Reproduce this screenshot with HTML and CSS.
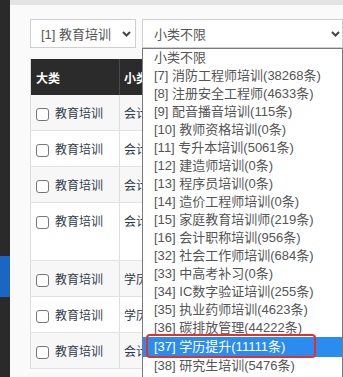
FILE: index.html
```html
<!DOCTYPE html>
<html lang="zh-CN">
<head>
<meta charset="utf-8">
<title>课程分类</title>
<link rel="stylesheet" href="styles.css">
</head>
<body>
<div class="app">
  <aside class="sidebar"><div class="side-top"></div><div class="side-active"></div><div class="side-rest"></div></aside>
  <main class="main">
    <div class="topbar"></div>
    <div class="content">
      <div class="filters">
        <div class="select s1">
          <span>[1] 教育培训</span>
          <svg class="chev" width="9" height="6" viewBox="0 0 9 6"><polyline points="1,1 4.5,4.5 8,1" fill="none" stroke="#444" stroke-width="2"/></svg>
        </div>
        <div class="sel-wrap">
          <div class="select s2">
            <span>小类不限</span>
            <svg class="chev" width="9" height="6" viewBox="0 0 9 6"><polyline points="1,1 4.5,4.5 8,1" fill="none" stroke="#444" stroke-width="2"/></svg>
          </div>
          <ul class="dropdown">
            <li>小类不限</li>
            <li>[7] 消防工程师培训(38268条)</li>
            <li>[8] 注册安全工程师(4633条)</li>
            <li>[9] 配音播音培训(115条)</li>
            <li>[10] 教师资格培训(0条)</li>
            <li>[11] 专升本培训(5061条)</li>
            <li>[12] 建造师培训(0条)</li>
            <li>[13] 程序员培训(0条)</li>
            <li>[14] 造价工程师培训(0条)</li>
            <li>[15] 家庭教育培训师(219条)</li>
            <li>[16] 会计职称培训(956条)</li>
            <li>[32] 社会工作师培训(684条)</li>
            <li>[33] 中高考补习(0条)</li>
            <li>[34] IC数字验证培训(255条)</li>
            <li>[35] 执业药师培训(4623条)</li>
            <li>[36] 碳排放管理(44222条)</li>
            <li class="sel">[37] 学历提升(11111条)<span class="mark"></span></li>
            <li>[38] 研究生培训(5476条)</li>
          </ul>
        </div>
      </div>
      <table class="grid">
        <colgroup><col class="c1"><col class="c2"></colgroup>
        <thead>
          <tr><th>大类</th><th><div class="clip">小类</div></th></tr>
        </thead>
        <tbody>
          <tr><td><span class="cb"></span>教育培训</td><td><div class="clip">会计</div></td></tr>
          <tr><td><span class="cb"></span>教育培训</td><td><div class="clip">会计</div></td></tr>
          <tr><td><span class="cb"></span>教育培训</td><td><div class="clip">会计</div></td></tr>
          <tr class="tall"><td><span class="cb"></span>教育培训</td><td><div class="clip">会计</div></td></tr>
          <tr><td><span class="cb"></span>教育培训</td><td><div class="clip">学历</div></td></tr>
          <tr><td><span class="cb"></span>教育培训</td><td><div class="clip">学历</div></td></tr>
          <tr><td><span class="cb"></span>教育培训</td><td><div class="clip">会计</div></td></tr>
        </tbody>
      </table>
    </div>
  </main>
</div>
</body>
</html>
```

FILE: styles.css
```css
* { box-sizing: border-box; margin: 0; padding: 0; }

body {
  margin: 0;
  width: 343px;
  height: 377px;
  overflow: hidden;
  background: #fafafa;
  font-family: "Liberation Sans", "Noto Sans CJK SC", sans-serif;
}

.app {
  display: flex;
  width: 343px;
  height: 377px;
  overflow: hidden;
}

.sidebar {
  width: 10px;
  flex: none;
  display: flex;
  flex-direction: column;
}

.side-top {
  height: 256px;
  background: #2a2a2a;
}

.side-active {
  height: 41px;
  background: #1a66c2;
}

.side-rest {
  flex: 1;
  background: #2a2a2a;
}

.main {
  flex: 1;
  min-width: 0;
  display: flex;
  flex-direction: column;
  overflow: hidden;
}

.topbar {
  height: 5px;
  flex: none;
  background: #e3e3e3;
}

.content {
  flex: 1;
  padding: 14px 0 0 20px;
  background: #fafafa;
}

.filters {
  display: flex;
  gap: 6px;
  height: 29px;
  position: relative;
  z-index: 2;
}

.select {
  height: 29px;
  border: 1px solid #cfcfcf;
  background: #fff;
  display: flex;
  align-items: center;
  justify-content: space-between;
  font-size: 13px;
  color: #555;
  white-space: nowrap;
}

.s1 {
  width: 107px;
  padding: 0 4px 0 10px;
}

.sel-wrap {
  position: relative;
  width: 201px;
  flex: none;
}

.s2 {
  width: 201px;
  padding: 0 2px 0 11px;
}

.chev { flex: none; }

.dropdown {
  position: absolute;
  left: 0;
  top: 29px;
  width: 201px;
  height: 340px;
  list-style: none;
  background: #fff;
  border: 1px solid #7a7a7a;
  font-size: 13px;
  color: #555;
}

.dropdown li {
  height: 18px;
  line-height: 18px;
  padding-left: 11px;
  white-space: nowrap;
}

.dropdown li.sel {
  position: relative;
  background: #2b8cef;
  color: #fff;
  height: 20px;
  line-height: 20px;
}

.mark {
  position: absolute;
  left: 3px;
  top: -3px;
  width: 170px;
  height: 24px;
  border: 2.5px solid #e3302c;
  border-radius: 4px;
}

.grid {
  margin-top: 11px;
  width: 113px;
  table-layout: fixed;
  border-collapse: collapse;
  font-family: "Noto Sans CJK SC", sans-serif;
  font-size: 12px;
  border-left: 1px solid #dcdcdc;
}

.c1 { width: 89px; }
.c2 { width: 24px; }

.grid th {
  height: 36px;
  background: #2b2b2b;
  color: #fff;
  font-weight: bold;
  text-align: left;
  padding: 0 0 0 5px;
  border-right: 1px solid #4a4a4a;
}

.grid th:last-child { padding-left: 4px; border-right: 0; }

.grid td {
  padding: 7px 0 7px 5px;
  line-height: 21px;
  color: #2f3b4a;
  vertical-align: top;
  border-bottom: 1px solid #e2e2e2;
  border-right: 1px solid #dedede;
  white-space: nowrap;
}

.grid td:last-child { padding-left: 4px; border-right: 0; }

.clip {
  overflow: hidden;
  white-space: nowrap;
}

.grid tr.tall td { height: 58px; }

.grid tbody tr:nth-child(odd) td { background: #f7f7f7; }
.grid tbody tr:nth-child(even) td { background: #fff; }

.cb {
  display: inline-block;
  width: 13px;
  height: 13px;
  border: 1px solid #767676;
  border-radius: 3px;
  background: #fff;
  vertical-align: -3px;
  margin-right: 6px;
}
```
